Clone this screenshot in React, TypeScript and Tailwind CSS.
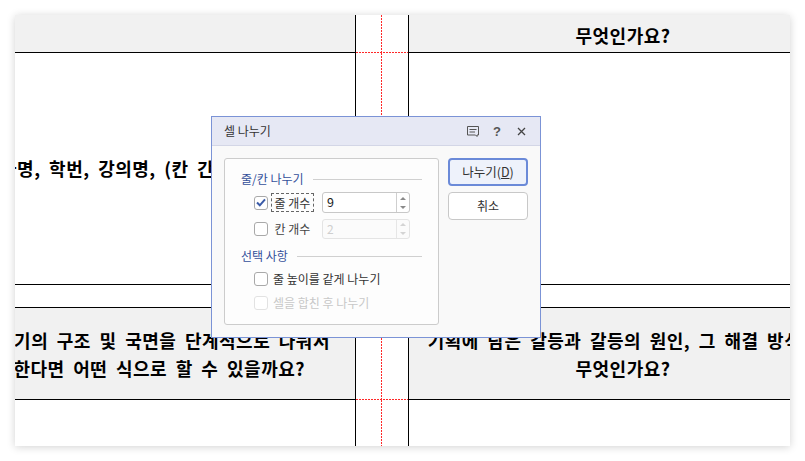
const kr = "font-['Noto_Sans_CJK_KR','Noto_Sans',sans-serif]";

const Check = ({ checked, disabled }: { checked?: boolean; disabled?: boolean }) => (
  <span
    className={`flex h-[14px] w-[14px] shrink-0 items-center justify-center rounded-[3px] border bg-white ${
      disabled ? "border-[#e2e2e2]" : "border-[#a9a9a9]"
    }`}
  >
    {checked && (
      <svg width="10" height="9" viewBox="0 0 10 9" fill="none">
        <path d="M1 4.5 L3.8 7.3 L9 1.3" stroke="#3a5ba8" strokeWidth="2" />
      </svg>
    )}
  </span>
);

const Spinner = ({ disabled }: { disabled?: boolean }) => (
  <div className={`flex h-full w-[13px] flex-col items-center justify-center gap-[6px] border-l ${disabled ? "border-[#e6e6e6]" : "border-[#cfcfcf]"}`}>
    <svg width="6" height="3" viewBox="0 0 6 3">
      <path d="M3 0 L6 3 L0 3 Z" fill={disabled ? "#d4d4d4" : "#8a8a8a"} />
    </svg>
    <svg width="6" height="3" viewBox="0 0 6 3">
      <path d="M0 0 L6 0 L3 3 Z" fill={disabled ? "#d4d4d4" : "#8a8a8a"} />
    </svg>
  </div>
);

const SectionTitle = ({ label }: { label: string }) => (
  <div className="flex items-center gap-[9px]">
    <span className="text-[12px] leading-[16px] text-[#34509a]">{label}</span>
    <div className="h-px flex-1 bg-[#d0d0d0]" />
  </div>
);

const Dialog = () => (
  <div className={`absolute left-[211px] top-[116px] flex h-[222px] w-[330px] flex-col border border-[#7b93d6] bg-[#f9f9f9] ${kr}`}>
    <div className="flex h-[29px] shrink-0 items-center border-b border-[#d3d6e6] bg-[#e6e8f4] pl-[12px] pr-[14px]">
      <span className="flex-1 text-[12px] text-[#333]">셀 나누기</span>
      <svg width="14" height="13" viewBox="0 0 14 13" fill="none" stroke="#555" strokeWidth="1">
        <path d="M1.5 1.5 H12.5 V10 H11 V11.5 L9.5 10 H1.5 Z" />
        <path d="M3.5 4.5 H10.5 M3.5 7 H9" />
      </svg>
      <span className="ml-[13px] font-['Liberation_Sans',sans-serif] text-[13px] font-bold leading-none text-[#555]">?</span>
      <svg className="ml-[16px]" width="9" height="9" viewBox="0 0 9 9" stroke="#444" strokeWidth="1.3">
        <path d="M1 1 L8 8 M8 1 L1 8" />
      </svg>
    </div>
    <div className="flex flex-1 items-start gap-[9px] pl-[12px] pt-[12px]">
      <div className="flex h-[167px] w-[215px] flex-col rounded-[3px] border border-[#cccccc] bg-[#fdfdfd] pl-[16px] pr-[16px] pt-[12px]">
        <SectionTitle label="줄/칸 나누기" />
        <div className="mt-[5px] flex h-[21px] items-center pl-[13px]">
          <Check checked />
          <span className="ml-[3px] flex h-[19px] w-[43px] items-center justify-center border border-dashed border-[#666] text-[12px] text-[#333]">줄 개수</span>
          <div className="ml-[8px] flex h-[21px] w-[88px] items-center rounded-[3px] border border-[#c8c8c8] bg-white pl-[4px]">
            <span className="flex-1 text-[12.5px] text-[#222]">9</span>
            <Spinner />
          </div>
        </div>
        <div className="mt-[6px] flex h-[20px] items-center pl-[13px]">
          <Check />
          <span className="ml-[3px] w-[43px] text-center text-[12px] text-[#444]">칸 개수</span>
          <div className="ml-[8px] flex h-[20px] w-[88px] items-center rounded-[3px] border border-[#e4e4e4] bg-[#fbfbfb] pl-[4px]">
            <span className="flex-1 text-[12px] text-[#cfcfcf]">2</span>
            <Spinner disabled />
          </div>
        </div>
        <div className="mt-[9px]">
          <SectionTitle label="선택 사항" />
        </div>
        <div className="mt-[7px] flex h-[16px] items-center gap-[5px] pl-[13px]">
          <Check />
          <span className="text-[12px] text-[#333]">줄 높이를 같게 나누기</span>
        </div>
        <div className="mt-[8px] flex h-[16px] items-center gap-[5px] pl-[13px]">
          <Check disabled />
          <span className="text-[12px] text-[#c8c8c8]">셀을 합친 후 나누기</span>
        </div>
      </div>
      <div className="flex w-[80px] flex-col gap-[6px]">
        <button className="h-[28px] rounded-[4px] border-2 border-[#6b8ad8] bg-[#eef2fb] text-[12.5px] text-[#333]">
          나누기(<span className="underline">D</span>)
        </button>
        <button className="h-[28px] rounded-[4px] border border-[#c8c8c8] bg-white text-[12px] text-[#333]">취소</button>
      </div>
    </div>
  </div>
);

// middle column between the two table cells, with its red guide lines
const Gutter = ({ bottomGuide }: { bottomGuide?: boolean }) => (
  <div className="relative border-x border-black bg-white">
    <div className="absolute inset-y-0 left-[25px] w-px bg-[repeating-linear-gradient(to_bottom,#ff2828_0_2px,transparent_2px_3px)]" />
    {bottomGuide && (
      <div className="absolute inset-x-0 bottom-0 h-px bg-[repeating-linear-gradient(to_right,#ff2828_0_2px,transparent_2px_3px)]" />
    )}
  </div>
);

const Heading = ({ children }: { children: React.ReactNode }) => (
  <div className="whitespace-nowrap text-[18px] font-bold leading-[28px] tracking-[0.5px] text-black [word-spacing:4px]">{children}</div>
);

export default function App() {
  return (
    <div className={`relative h-[461px] w-[805px] overflow-hidden bg-white p-[15px] ${kr}`}>
      <div className="grid h-[431px] w-[775px] grid-cols-[340px_54px_381px] grid-rows-[38px_232px_23px_92px_46px] rounded-t-[3px] bg-white shadow-[0_1px_8px_rgba(0,0,0,0.18)]">
        {/* row 1 */}
        <div className="border-b border-black bg-[#f1f1f1]" />
        <Gutter bottomGuide />
        <div className="flex items-center justify-center overflow-hidden border-b border-black bg-[#f1f1f1] pt-[2px]">
          <div className="ml-[47px] w-[428px] shrink-0 text-center">
            <Heading>무엇인가요?</Heading>
          </div>
        </div>

        {/* row 2 */}
        <div className="flex items-center overflow-hidden border-b border-black bg-white pb-[1px]">
          <div className="-ml-[32px] shrink-0">
            <Heading>학과명, 학번, 강의명, (칸 간격 조정)</Heading>
          </div>
        </div>
        <Gutter />
        <div className="border-b border-black bg-white" />

        {/* row 3 */}
        <div className="border-b border-black bg-white" />
        <Gutter />
        <div className="border-b border-black bg-white" />

        {/* row 4 */}
        <div className="flex flex-col items-end justify-center overflow-hidden border-b border-black bg-[#f1f1f1]">
          <div className="mr-[25px] shrink-0">
            <Heading>이야기의 구조 및 국면을 단계적으로 나눠서</Heading>
          </div>
          <div className="mr-[50px] shrink-0">
            <Heading>구분한다면 어떤 식으로 할 수 있을까요?</Heading>
          </div>
        </div>
        <Gutter bottomGuide />
        <div className="flex flex-col items-center justify-center overflow-hidden border-b border-black bg-[#f1f1f1]">
          <div className="ml-[47px] w-[428px] shrink-0 text-center">
            <Heading>기획에 담은 갈등과 갈등의 원인, 그 해결 방식은</Heading>
            <Heading>무엇인가요?</Heading>
          </div>
        </div>

        {/* row 5 */}
        <div className="bg-white" />
        <Gutter />
        <div className="bg-white" />
      </div>
      <Dialog />
    </div>
  );
}
